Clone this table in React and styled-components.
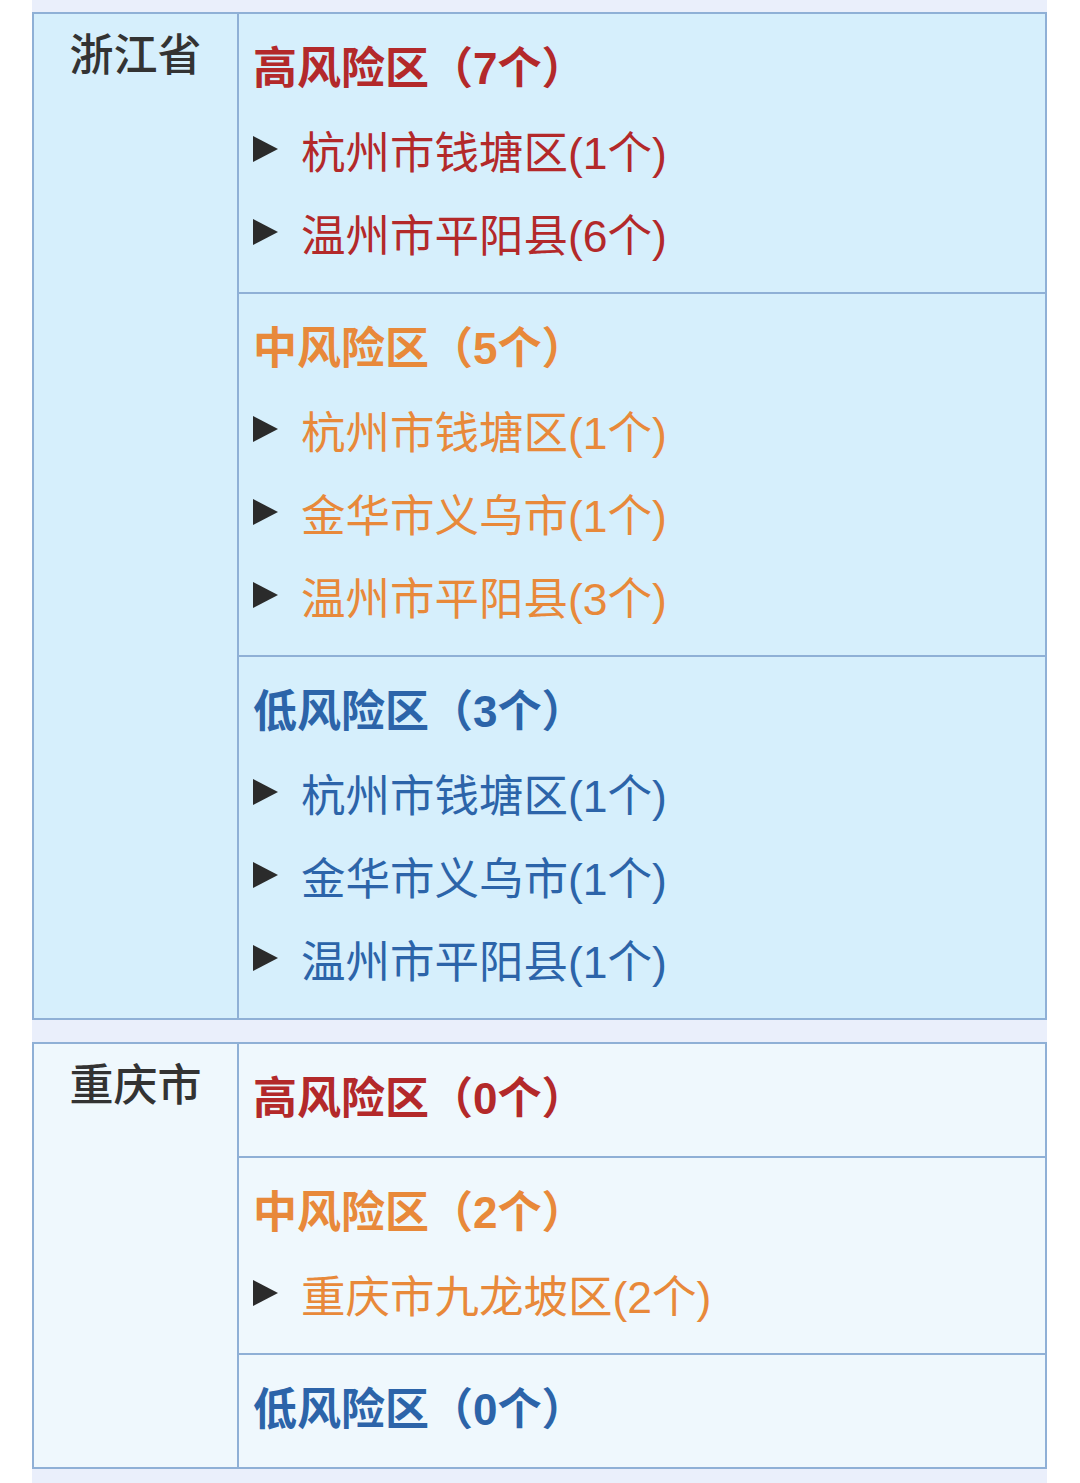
import React from 'react';
import styled, { createGlobalStyle } from 'styled-components';

const GlobalStyle = createGlobalStyle`
  body {
    margin: 0;
    background: #ffffff;
    font-family: "Liberation Sans", "Noto Sans CJK SC", sans-serif;
  }
`;

const Page = styled.div`
  margin-left: 32px;
  width: 1015px;
  padding: 12px 0 17px;
  background: #eaeffb;
  display: flex;
  flex-direction: column;
  gap: 22px;
`;

const Card = styled.div`
  display: grid;
  grid-template-columns: 205px 1fr;
  border: 2px solid #8fb0d6;
  background: ${(p) => p.$bg};
`;

const Province = styled.div`
  border-right: 2px solid #8fb0d6;
  text-align: center;
  font-size: 44px;
  line-height: 84px;
  font-weight: 500;
  color: #333333;
`;

const Levels = styled.div`
  display: flex;
  flex-direction: column;
`;

const Level = styled.div`
  padding: 13px 0 16px 14px;
  & + & {
    border-top: 2px solid #8fb0d6;
  }
`;

const LevelTitle = styled.div`
  font-size: 44px;
  line-height: 83px;
  font-weight: 700;
  color: ${(p) => p.$color};
`;

const Item = styled.div`
  display: flex;
  align-items: center;
  box-sizing: border-box;
  height: 83px;
  padding-bottom: 5px;
  font-size: 44.5px;
  color: ${(p) => p.$color};
`;

const Arrow = styled.svg`
  width: 25px;
  height: 26px;
  margin-right: 23px;
  flex-shrink: 0;
`;

const COLORS = {
  高: '#b3292a',
  中: '#e8893a',
  低: '#2c64a9',
};

const data = [
  {
    province: '浙江省',
    bg: '#d6effc',
    levels: [
      { key: '高', count: 7, items: ['杭州市钱塘区(1个)', '温州市平阳县(6个)'] },
      { key: '中', count: 5, items: ['杭州市钱塘区(1个)', '金华市义乌市(1个)', '温州市平阳县(3个)'] },
      { key: '低', count: 3, items: ['杭州市钱塘区(1个)', '金华市义乌市(1个)', '温州市平阳县(1个)'] },
    ],
  },
  {
    province: '重庆市',
    bg: '#eff8fd',
    levels: [
      { key: '高', count: 0, items: [] },
      { key: '中', count: 2, items: ['重庆市九龙坡区(2个)'] },
      { key: '低', count: 0, items: [] },
    ],
  },
];

const App = () => (
  <>
    <GlobalStyle />
    <Page>
      {data.map((card) => (
        <Card key={card.province} $bg={card.bg}>
          <Province>{card.province}</Province>
          <Levels>
            {card.levels.map((lv) => (
              <Level key={lv.key}>
                <LevelTitle $color={COLORS[lv.key]}>
                  {lv.key}风险区（{lv.count}个）
                </LevelTitle>
                {lv.items.map((item, i) => (
                  <Item key={i} $color={COLORS[lv.key]}>
                    <Arrow viewBox="0 0 25 26">
                      <path d="M0 0 L25 13 L0 26 Z" fill="#2b2b2b" />
                    </Arrow>
                    {item}
                  </Item>
                ))}
              </Level>
            ))}
          </Levels>
        </Card>
      ))}
    </Page>
  </>
);

export default App;
